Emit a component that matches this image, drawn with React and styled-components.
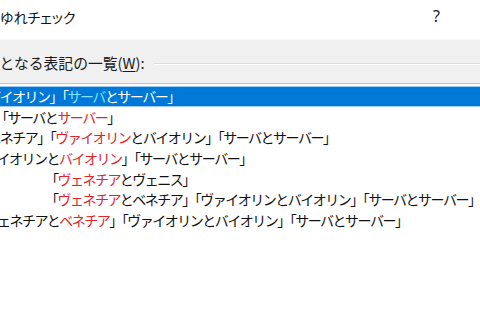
import React from "react";
import styled, { createGlobalStyle } from "styled-components";

const GlobalStyle = createGlobalStyle`
  html, body {
    margin: 0;
    padding: 0;
    background: #ffffff;
  }
  body {
    font-family: "Noto Sans CJK JP", "Noto Sans", sans-serif;
    color: #111111;
  }
`;

const Dialog = styled.div`
  width: 480px;
  height: 320px;
  overflow: hidden;
  display: flex;
  flex-direction: column;
  background: #f0f0f0;
`;

const TitleBar = styled.div`
  height: 40px;
  flex: none;
  background: #ffffff;
  display: flex;
  align-items: flex-start;
  justify-content: space-between;
  padding-right: 40px;
  border-bottom: 1px solid #fafafa;
  box-sizing: border-box;
`;

const Title = styled.div`
  margin-left: -28px;
  margin-top: 6px;
  font-size: 14px;
  line-height: 22px;
  font-feature-settings: "palt";
  white-space: nowrap;
`;

const HelpButton = styled.div`
  margin-top: 5px;
  font-family: "Noto Sans", sans-serif;
  font-size: 16px;
  line-height: 22px;
  color: #222;
`;

const GroupHeader = styled.div`
  height: 43px;
  flex: none;
  display: flex;
  align-items: center;
  padding-top: 2px;
  box-sizing: border-box;
`;

const GroupLabel = styled.div`
  margin-left: -30px;
  font-size: 14.8px;
  line-height: 20px;
  white-space: nowrap;
  color: #1a1a1a;

  u {
    text-decoration-thickness: 1px;
    text-underline-offset: 2px;
  }
`;

const EtchedLine = styled.div`
  flex: 1;
  margin-left: 9px;
  margin-top: 2px;
  height: 1px;
  background: #dcdcdc;
  border-bottom: 1px solid #ffffff;
`;

const ListBox = styled.div`
  flex: 1;
  background: #ffffff;
  border-top: 1px solid #c4c4c4;
  padding-top: 2px;
  overflow: hidden;
`;

const Row = styled.div`
  margin-left: ${(p) => p.$indent}px;
  height: 20.67px;
  line-height: 20.67px;
  font-size: 14px;
  letter-spacing: -1.5px;
  white-space: nowrap;
  background: ${(p) => (p.$selected ? "#0078d7" : "transparent")};
  color: ${(p) => (p.$selected ? "#ffffff" : "#111111")};
  box-shadow: ${(p) =>
    p.$selected ? "inset 0 1px 0 #9fcdf3, inset 0 -1px 0 #9fcdf3" : "none"};
`;

const Mark = styled.span`
  color: ${(p) => (p.$selected ? "#7fe3ff" : "#e3242b")};
`;

const rows = [
  {
    indent: -113,
    selected: true,
    parts: ["「ヴァイオリンとバイオリン」「", ["サーバ"], "とサーバー」"],
  },
  { indent: -5, parts: ["「サーバと", ["サーバー"], "」"] },
  {
    indent: -100,
    parts: [
      "「ヴェネチアとベネチア」「",
      ["ヴァイオリン"],
      "とバイオリン」「サーバとサーバー」",
    ],
  },
  {
    indent: -41,
    parts: ["「ヴァイオリンと", ["バイオリン"], "」「サーバとサーバー」"],
  },
  { indent: 45, parts: ["「", ["ヴェネチア"], "とヴェニス」"] },
  {
    indent: 45,
    parts: [
      "「",
      ["ヴェネチア"],
      "とベネチア」「ヴァイオリンとバイオリン」「サーバとサーバー」",
    ],
  },
  {
    indent: -28,
    parts: [
      "「ヴェネチアと",
      ["ベネチア"],
      "」「ヴァイオリンとバイオリン」「サーバとサーバー」",
    ],
  },
];

const App = () => {
  return (
    <>
      <GlobalStyle />
      <Dialog>
        <TitleBar>
          <Title>表記ゆれチェック</Title>
          <HelpButton>?</HelpButton>
        </TitleBar>
        <GroupHeader>
          <GroupLabel>
            対象となる表記の一覧(<u>W</u>):
          </GroupLabel>
          <EtchedLine />
        </GroupHeader>
        <ListBox>
          {rows.map((row, i) => (
            <Row key={i} $indent={row.indent} $selected={row.selected}>
              {row.parts.map((part, j) =>
                Array.isArray(part) ? (
                  <Mark key={j} $selected={row.selected}>
                    {part[0]}
                  </Mark>
                ) : (
                  <span key={j}>{part}</span>
                )
              )}
            </Row>
          ))}
        </ListBox>
      </Dialog>
    </>
  );
};

export default App;
